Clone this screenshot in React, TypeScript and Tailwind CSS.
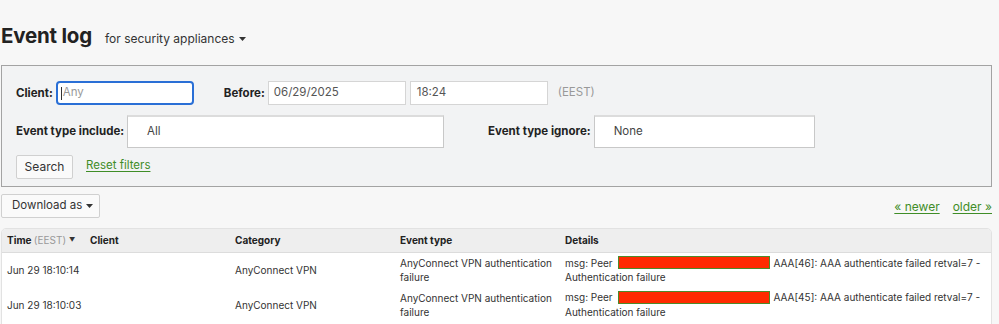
import React from "react";

function Caret({ className = "" }: { className?: string }) {
  return (
    <svg width="7" height="4" viewBox="0 0 7 4" className={className}>
      <path d="M0 0 L7 0 L3.5 4 Z" fill="currentColor" />
    </svg>
  );
}

function Redacted() {
  return (
    <span className="inline-block align-middle w-[152px] h-[13px] bg-[#ff2a00] border border-[#4c8a2a] mx-[3px] relative top-[-1px]" />
  );
}

export default function App() {
  return (
    <div
      className="h-[324px] w-[999px] bg-[#f7f7f7] text-[#222] overflow-hidden"
      style={{ fontFamily: "Inter, 'Liberation Sans', sans-serif" }}
    >
      <div className="pl-[1px] w-[992px]">
        {/* Title */}
        <div className="flex items-baseline pt-[22px] h-[65px]">
          <h1 className="text-[20.5px] font-bold leading-[28px] tracking-[-0.2px] text-[#222]">Event log</h1>
          <div className="ml-[13px] text-[12px] text-[#333] flex items-center gap-[4px]">
            for security appliances
            <Caret className="text-[#333]" />
          </div>
        </div>

        {/* Filter panel */}
        <div className="w-[991px] border border-[#a3a3a3] bg-[#f2f3f4] pl-[14px] pt-[15px] pb-[7px] text-[11.5px]">
          <div className="flex items-center h-[24px]">
            <span className="font-bold text-[#222] relative top-[1px]">Client:</span>
            <div className="ml-[3px] w-[138px] h-[24px] border-2 border-[#2a6fd6] rounded-[4px] bg-white flex items-center pl-[3px]">
              <span className="w-[1px] h-[13px] bg-[#333]" />
              <span className="text-[#999] ml-[1px]">Any</span>
            </div>
            <span className="ml-[30px] font-bold text-[#222] relative top-[1px]">Before:</span>
            <div className="ml-[3px] w-[138px] h-[24px] border border-[#d5d5d5] bg-white flex items-center pl-[5px] text-[#555]">
              06/29/2025
            </div>
            <div className="ml-[4px] w-[138px] h-[24px] border border-[#d5d5d5] bg-white flex items-center pl-[6px] text-[#555]">
              18:24
            </div>
            <span className="ml-[10px] text-[#999]">(EEST)</span>
          </div>

          <div className="flex items-center h-[33px] mt-[10px]">
            <span className="font-bold text-[#222]">Event type include:</span>
            <div className="ml-[3px] w-[317px] h-[33px] border border-[#c8c8c8] border-t-2 border-t-[#dcdcdc] bg-white flex items-center pl-[19px] text-[#444]">
              All
            </div>
            <span className="ml-[44px] font-bold text-[#222]">Event type ignore:</span>
            <div className="ml-[3px] w-[221px] h-[33px] border border-[#c8c8c8] border-t-2 border-t-[#dcdcdc] bg-white flex items-center pl-[19px] text-[#444]">
              None
            </div>
          </div>

          <div className="flex items-center h-[24px] mt-[7px]">
            <div className="w-[57px] h-[24px] border border-[#d0d0d0] bg-[#fafafa] rounded-[2px] flex items-center justify-center text-[#333] text-[12px]">
              Search
            </div>
            <a className="ml-[13px] text-[#3f8d27] underline underline-offset-2 relative top-[-1px]">Reset filters</a>
          </div>
        </div>

        {/* Download + pager */}
        <div className="flex items-center justify-between mt-[7px] h-[24px] w-[991px]">
          <div className="w-[99px] h-[24px] border border-[#d0d0d0] bg-[#fafafa] rounded-[2px] flex items-center pl-[10px] gap-[4px] text-[11.5px] text-[#333]">
            Download as
            <Caret className="text-[#333]" />
          </div>
          <div className="flex items-center gap-[13px] text-[12px] text-[#3f8d27] relative top-[1px]">
            <a className="underline underline-offset-2">« newer</a>
            <a className="underline underline-offset-2">older »</a>
          </div>
        </div>

        {/* Table */}
        <div className="mt-[10px] w-[991px] h-[120px] border border-[#e2e2e2] rounded-[5px] bg-white overflow-hidden">
          <table className="w-full table-fixed border-collapse text-[10px] text-[#333]">
            <colgroup>
              <col className="w-[83px]" />
              <col className="w-[145px]" />
              <col className="w-[165px]" />
              <col className="w-[165px]" />
              <col />
            </colgroup>
            <thead>
              <tr className="h-[23px] bg-[#eeeeee] border-b border-[#dcdcdc] text-left">
                <th className="pl-[5px] font-bold text-[#222] whitespace-nowrap">
                  Time <span className="font-normal text-[#999]">(EEST)</span>
                  <span className="text-[6px] text-[#333] ml-[3px] relative top-[-2px]">▼</span>
                </th>
                <th className="pl-[5px] font-bold text-[#222]">Client</th>
                <th className="pl-[5px] font-bold text-[#222]">Category</th>
                <th className="pl-[5px] font-bold text-[#222]">Event type</th>
                <th className="pl-[5px] font-bold text-[#222]">Details</th>
              </tr>
            </thead>
            <tbody>
              {[
                { t: "Jun 29 18:10:14", n: "46" },
                { t: "Jun 29 18:10:03", n: "45" },
              ].map((r) => (
                <tr key={r.n} className="h-[34px] align-middle leading-[14px]">
                  <td className="pl-[5px] whitespace-nowrap">{r.t}</td>
                  <td className="pl-[5px]"></td>
                  <td className="pl-[5px]">AnyConnect VPN</td>
                  <td className="pl-[5px] py-[3px] whitespace-nowrap">
                    AnyConnect VPN authentication
                    <br />
                    failure
                  </td>
                  <td className="pl-[5px] py-[3px] whitespace-nowrap">
                    msg: Peer <Redacted />AAA[{r.n}]: AAA authenticate failed retval=7 -
                    <br />
                    Authentication failure
                  </td>
                </tr>
              ))}
            </tbody>
          </table>
        </div>
      </div>
    </div>
  );
}
